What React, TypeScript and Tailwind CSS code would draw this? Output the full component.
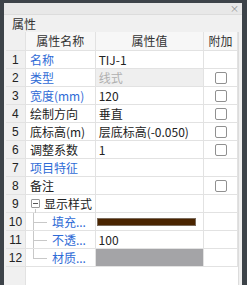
import React from "react";

const F = { fontFamily: '"Noto Sans CJK SC", "Liberation Sans", sans-serif' };

function Check() {
  return <div className="w-[12px] h-[12px] rounded-[2px] border border-[#909090] bg-white" />;
}

type Row = {
  n: number;
  name: React.ReactNode;
  blue?: boolean;
  value?: React.ReactNode;
  valueCls?: string;
  check?: boolean;
};

function TreeName({ text, last }: { text: string; last?: boolean }) {
  return (
    <div className="relative h-full flex items-center pl-[26px]">
      <div className={`absolute left-[7px] top-0 w-px bg-[#c8c8c8] ${last ? "h-[9px]" : "h-full"}`} />
      <div className="absolute left-[7px] top-[9px] w-[14px] h-px bg-[#c8c8c8]" />
      <span className="text-[#2f6bd6]">{text}</span>
    </div>
  );
}

export default function App() {
  const rows: Row[] = [
    { n: 1, name: "名称", blue: true, value: "TIJ-1" },
    { n: 2, name: "类型", blue: true, value: <span className="text-[#b0b0b0]">线式</span>, valueCls: "bg-[#efefef]", check: true },
    { n: 3, name: "宽度(mm)", blue: true, value: "120", check: true },
    { n: 4, name: "绘制方向", value: "垂直", check: true },
    { n: 5, name: "底标高(m)", value: "层底标高(-0.050)", check: true },
    { n: 6, name: "调整系数", value: "1", check: true },
    { n: 7, name: "项目特征", blue: true, value: "" },
    { n: 8, name: "备注", value: "", check: true },
  ];
  return (
    <div className="w-[247px] h-[285px] bg-[#3d4349] pt-[3px] pl-[4px] pr-[5px] overflow-hidden text-[12px] text-[#222]" style={F}>
      <div className="h-full flex flex-col bg-[#f0f0f0]">
        <div className="h-[12px] bg-[#e8e8e8] border-b border-[#dcdcdc] flex justify-end items-center pr-[3px]">
          <span className="text-[9px] leading-none text-[#888]">×</span>
        </div>
        <div className="h-[17px] flex items-center pl-[8px] text-[#333] leading-none">属性</div>
        <div className="flex-1 ml-[2px] mr-[3px] border-r border-[#dcdcdc] bg-white flex flex-col">
          <div className="flex h-[19px] bg-[#f7f7f7] border-b border-[#e2e2e2] text-[#333]">
            <div className="w-[20px] bg-[#f0f0f0] border-r border-[#e2e2e2]" />
            <div className="w-[70px] border-r border-[#e2e2e2] flex items-center justify-center">属性名称</div>
            <div className="w-[109px] border-r border-[#e2e2e2] flex items-center justify-center">属性值</div>
            <div className="w-[34px] border-r border-[#e2e2e2] flex items-center justify-center">附加</div>
          </div>
          {rows.map((r) => (
            <div key={r.n} className="flex h-[18px] border-b border-[#e2e2e2]">
              <div className="w-[20px] bg-[#f0f0f0] border-r border-[#e2e2e2] flex items-center justify-center" style={{ fontFamily: '"Liberation Sans", sans-serif' }}>{r.n}</div>
              <div className={`w-[70px] border-r border-[#e2e2e2] flex items-center pl-[4px] whitespace-nowrap ${r.blue ? "text-[#2f6bd6]" : ""}`}>{r.name}</div>
              <div className={`w-[109px] border-r border-[#e2e2e2] flex items-center pl-[3px] whitespace-nowrap ${r.valueCls ?? ""}`}>{r.value}</div>
              <div className="w-[34px] border-r border-[#e2e2e2] flex items-center justify-center">{r.check ? <Check /> : null}</div>
            </div>
          ))}
          <div className="flex h-[18px] border-b border-[#e2e2e2]">
            <div className="w-[20px] bg-[#f0f0f0] border-r border-[#e2e2e2] flex items-center justify-center" style={{ fontFamily: '"Liberation Sans", sans-serif' }}>9</div>
            <div className="w-[70px] border-r border-[#e2e2e2] flex items-center pl-[5px] whitespace-nowrap relative">
              <div className="w-[9px] h-[9px] border border-[#999] rounded-[1px] flex items-center justify-center bg-white">
                <div className="w-[5px] h-px bg-[#555]" />
              </div>
              <span className="ml-[4px]">显示样式</span>
              <div className="absolute left-[9px] top-[14px] w-px h-[4px] bg-[#c8c8c8]" />
            </div>
            <div className="w-[109px] border-r border-[#e2e2e2]" />
            <div className="w-[34px] border-r border-[#e2e2e2]" />
          </div>
          <div className="flex h-[18px] border-b border-[#e2e2e2]">
            <div className="w-[20px] bg-[#f0f0f0] border-r border-[#e2e2e2] flex items-center justify-center" style={{ fontFamily: '"Liberation Sans", sans-serif' }}>10</div>
            <div className="w-[70px] border-r border-[#e2e2e2] whitespace-nowrap"><TreeName text="填充..." /></div>
            <div className="w-[109px] border-r border-[#e2e2e2] flex items-center pl-[1px]">
              <div className="w-[99px] h-[8px] bg-[#4a2400] border border-[#7a6a5a]" />
            </div>
            <div className="w-[34px] border-r border-[#e2e2e2]" />
          </div>
          <div className="flex h-[18px] border-b border-[#e2e2e2]">
            <div className="w-[20px] bg-[#f0f0f0] border-r border-[#e2e2e2] flex items-center justify-center" style={{ fontFamily: '"Liberation Sans", sans-serif' }}>11</div>
            <div className="w-[70px] border-r border-[#e2e2e2] whitespace-nowrap"><TreeName text="不透..." /></div>
            <div className="w-[109px] border-r border-[#e2e2e2] flex items-center pl-[3px]">100</div>
            <div className="w-[34px] border-r border-[#e2e2e2]" />
          </div>
          <div className="flex h-[18px] border-b border-[#e2e2e2]">
            <div className="w-[20px] bg-[#f0f0f0] border-r border-[#e2e2e2] flex items-center justify-center" style={{ fontFamily: '"Liberation Sans", sans-serif' }}>12</div>
            <div className="w-[70px] border-r border-[#e2e2e2] whitespace-nowrap"><TreeName text="材质..." last /></div>
            <div className="w-[109px] border-r border-[#e2e2e2] bg-[#a4a4a7]" />
            <div className="w-[34px] border-r border-[#e2e2e2]" />
          </div>
          <div className="flex-1 flex">
            <div className="w-[20px] bg-[#f0f0f0] border-r border-[#e2e2e2]" />
          </div>
        </div>
      </div>
    </div>
  );
}
